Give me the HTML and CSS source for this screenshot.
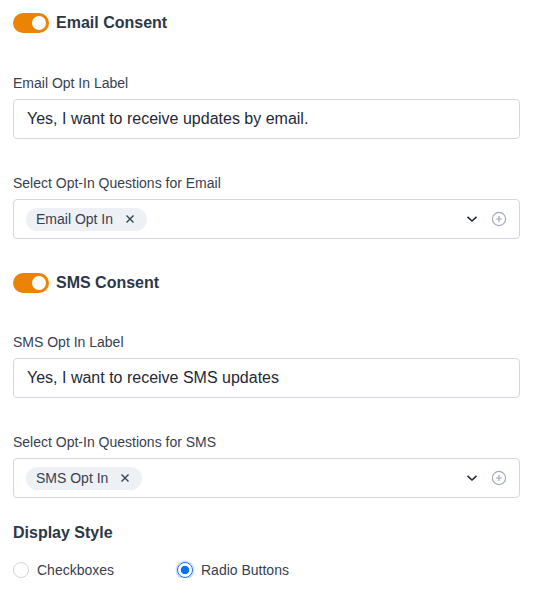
FILE: index.html
```html
<!DOCTYPE html>
<html>
<head>
<meta charset="utf-8">
<link rel="stylesheet" href="styles.css">
</head>
<body>
<div class="page">
  <div class="toggle-row">
    <span class="toggle"><span class="knob"></span></span>
    <span class="toggle-title">Email Consent</span>
  </div>
  <div class="field first">
    <div class="label">Email Opt In Label</div>
    <div class="input">Yes, I want to receive updates by email.</div>
  </div>
  <div class="field">
    <div class="label">Select Opt-In Questions for Email</div>
    <div class="select">
      <span class="tag">Email Opt In
        <svg class="x" width="10" height="10" viewBox="0 0 10 10"><path d="M1.5 1.5 L8.5 8.5 M8.5 1.5 L1.5 8.5" stroke="#374151" stroke-width="1.4" fill="none"/></svg>
      </span>
      <span class="icons">
        <svg width="12" height="8" viewBox="0 0 12 8"><path d="M1.5 1.8 L6 6 L10.5 1.8" stroke="#1f2937" stroke-width="1.6" fill="none"/></svg>
        <svg width="16" height="16" viewBox="0 0 16 16"><circle cx="8" cy="8" r="6.6" stroke="#a0a7b4" stroke-width="1.1" fill="none"/><path d="M8 5 V11 M5 8 H11" stroke="#a0a7b4" stroke-width="1.2"/></svg>
      </span>
    </div>
  </div>

  <div class="toggle-row second">
    <span class="toggle"><span class="knob"></span></span>
    <span class="toggle-title">SMS Consent</span>
  </div>
  <div class="field first sms">
    <div class="label">SMS Opt In Label</div>
    <div class="input">Yes, I want to receive SMS updates</div>
  </div>
  <div class="field">
    <div class="label">Select Opt-In Questions for SMS</div>
    <div class="select">
      <span class="tag">SMS Opt In
        <svg class="x" width="10" height="10" viewBox="0 0 10 10"><path d="M1.5 1.5 L8.5 8.5 M8.5 1.5 L1.5 8.5" stroke="#374151" stroke-width="1.4" fill="none"/></svg>
      </span>
      <span class="icons">
        <svg width="12" height="8" viewBox="0 0 12 8"><path d="M1.5 1.8 L6 6 L10.5 1.8" stroke="#1f2937" stroke-width="1.6" fill="none"/></svg>
        <svg width="16" height="16" viewBox="0 0 16 16"><circle cx="8" cy="8" r="6.6" stroke="#a0a7b4" stroke-width="1.1" fill="none"/><path d="M8 5 V11 M5 8 H11" stroke="#a0a7b4" stroke-width="1.2"/></svg>
      </span>
    </div>
  </div>

  <div class="display">
    <div class="display-title">Display Style</div>
    <div class="radios">
      <label class="radio"><span class="circle"></span>Checkboxes</label>
      <label class="radio"><span class="circle on"></span>Radio Buttons</label>
    </div>
  </div>
</div>
</body>
</html>
```
FILE: styles.css
```css
* { box-sizing: border-box; }
body {
  margin: 0;
  font-family: "Liberation Sans", Arial, sans-serif;
  background: #fff;
  color: #1f2937;
}
.page {
  width: 520px;
  padding: 13px 0 0 13px;
}
.toggle-row {
  display: flex;
  align-items: center;
  height: 20px;
}
.toggle-row.second { margin-top: 34px; }
.toggle {
  width: 36px;
  height: 20px;
  border-radius: 10px;
  background: #ea8306;
  position: relative;
  display: inline-block;
}
.knob {
  position: absolute;
  right: 3px;
  top: 3px;
  width: 14px;
  height: 14px;
  border-radius: 50%;
  background: #fff;
}
.toggle-title {
  margin-left: 7px;
  font-size: 16px;
  font-weight: bold;
  color: #2d3748;
}
.field { margin-top: 36px; }
.field.first { margin-top: 42px; }
.field.first.sms { margin-top: 41px; }
.label {
  font-size: 14px;
  line-height: 16px;
  color: #374151;
  margin-bottom: 8px;
}
.input {
  height: 40px;
  border: 1px solid #d4d7de;
  border-radius: 4px;
  padding: 0 13px;
  display: flex;
  align-items: center;
  font-size: 16px;
  color: #1f2937;
}
.select {
  height: 40px;
  border: 1px solid #d4d7de;
  border-radius: 4px;
  padding: 0 12px 0 12px;
  display: flex;
  align-items: center;
  justify-content: space-between;
}
.tag {
  display: inline-flex;
  align-items: center;
  height: 23px;
  padding: 0 12px 0 10px;
  border-radius: 12px;
  background: #edf0f5;
  font-size: 14px;
  color: #374151;
}
.tag .x { margin-left: 12px; }
.icons {
  display: flex;
  align-items: center;
  gap: 13px;
}
.display { margin-top: 25px; }
.display-title {
  font-size: 16px;
  font-weight: bold;
  color: #2d3748;
  line-height: 20px;
}
.radios {
  display: flex;
  margin-top: 19px;
  height: 16px;
}
.radio {
  display: flex;
  align-items: center;
  font-size: 14px;
  color: #374151;
  width: 164px;
}
.circle {
  width: 16px;
  height: 16px;
  border-radius: 50%;
  border: 1px solid #d1d5db;
  margin-right: 8px;
  background: #fff;
}
.circle.on {
  border: 1.5px solid #1a73e8;
  background: radial-gradient(circle, #0b6ff0 0 3.8px, #fff 4.6px);
  box-shadow: 0 0 0 1.5px #c9defb;
}
```
